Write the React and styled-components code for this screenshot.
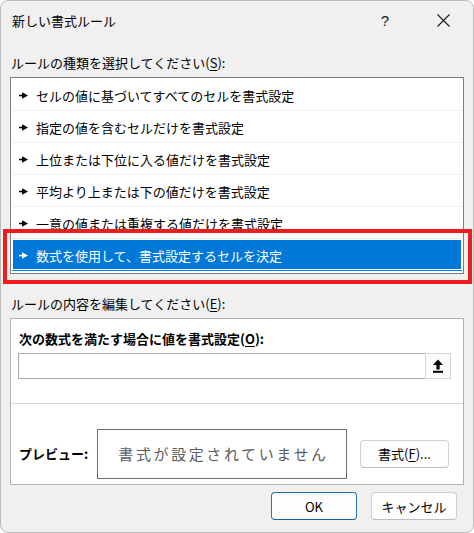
import React from 'react';
import styled, { createGlobalStyle } from 'styled-components';

const GlobalStyle = createGlobalStyle`
  html, body {
    margin: 0;
    padding: 0;
    background: #ffffff;
  }
  body {
    font-family: "Noto Sans CJK JP", "Noto Sans", sans-serif;
    font-size: 13px;
    color: #000;
  }
`;

const ruleTypes = [
  'セルの値に基づいてすべてのセルを書式設定',
  '指定の値を含むセルだけを書式設定',
  '上位または下位に入る値だけを書式設定',
  '平均より上または下の値だけを書式設定',
  '一意の値または重複する値だけを書式設定',
  '数式を使用して、書式設定するセルを決定',
];

const Marker = ({ color }) => (
  <svg width="9" height="7" viewBox="0 0 9 7">
    <path d="M0 2.7h4v1.6H0z" fill={color} />
    <path d="M3 0.3L9 3.5 3 6.7z" fill={color} />
  </svg>
);

const UploadIcon = () => (
  <svg width="10" height="14" viewBox="0 0 10 14">
    <path d="M5 0.5L10 6H6.6v4.5H3.4V6H0z" fill="#000" />
    <rect x="0" y="11.8" width="10" height="2" fill="#000" />
  </svg>
);

const CloseIcon = () => (
  <svg width="13" height="13" viewBox="0 0 13 13">
    <path d="M0.5 0.5L12.5 12.5M12.5 0.5L0.5 12.5" stroke="#1a1a1a" strokeWidth="1.1" />
  </svg>
);

export default function App() {
  return (
    <>
      <GlobalStyle />
      <Window>
        <TitleBar>
          <Title>新しい書式ルール</Title>
          <Controls>
            <CaptionButton>?</CaptionButton>
            <CaptionButton>
              <CloseIcon />
            </CaptionButton>
          </Controls>
        </TitleBar>

        <Content>
          <SectionLabel top={14}>
            ルールの種類を選択してください(<u>S</u>):
          </SectionLabel>
          <RuleList>
            {ruleTypes.map((text, i) => {
              const selected = i === ruleTypes.length - 1;
              return (
                <RuleRow key={text} selected={selected} last={selected}>
                  <Marker color={selected ? '#ffffff' : '#000000'} />
                  <RuleText>{text}</RuleText>
                </RuleRow>
              );
            })}
          </RuleList>

          <SectionLabel top={21}>
            ルールの内容を編集してください(<u>E</u>):
          </SectionLabel>
          <Panel>
            <FormulaSection>
              <BoldLabel>
                次の数式を満たす場合に値を書式設定(<u>O</u>):
              </BoldLabel>
              <FormulaInput>
                <InputField />
                <RefButton>
                  <UploadIcon />
                </RefButton>
              </FormulaInput>
            </FormulaSection>
            <PreviewSection>
              <PreviewLabel>プレビュー:</PreviewLabel>
              <PreviewBox>書式が設定されていません</PreviewBox>
              <FormatButton>
                書式(<u>F</u>)...
              </FormatButton>
            </PreviewSection>
          </Panel>

          <Footer>
            <DialogButton primary>OK</DialogButton>
            <DialogButton>キャンセル</DialogButton>
          </Footer>
        </Content>

        <Highlight />
      </Window>
    </>
  );
}

const Window = styled.div`
  position: relative;
  width: 474px;
  height: 533px;
  box-sizing: border-box;
  border: 1px solid #bcbcbc;
  border-radius: 8px;
  background: #f0f0f0;
  overflow: hidden;
`;

const TitleBar = styled.div`
  display: flex;
  align-items: center;
  height: 39px;
  padding-left: 11px;
`;

const Title = styled.div`
  font-size: 13px;
  color: #000;
`;

const Controls = styled.div`
  display: flex;
  gap: 12px;
  margin-left: auto;
  padding-right: 7px;
`;

const CaptionButton = styled.div`
  display: flex;
  align-items: center;
  justify-content: center;
  width: 46px;
  height: 32px;
  font-family: "Liberation Sans", sans-serif;
  font-size: 15px;
  color: #1a1a1a;
`;

const Content = styled.div`
  padding: 0 9px;
`;

const SectionLabel = styled.div`
  margin-top: ${(p) => p.top}px;
  padding-left: 1px;
  line-height: 18px;
  font-size: 13px;

  u {
    text-decoration-thickness: 1px;
    text-underline-offset: 2px;
  }
`;

const RuleList = styled.div`
  margin-top: 5px;
  height: 197px;
  box-sizing: border-box;
  border: 1px solid #7d7d7d;
  background: #fff;
  padding: 1px 1px 2px;
`;

const RuleRow = styled.div`
  display: flex;
  align-items: center;
  gap: 8px;
  height: 32px;
  box-sizing: border-box;
  padding: 2px 0 0 7px;
  border-bottom: 1px solid ${(p) => (p.last ? 'transparent' : '#efefef')};
  background: ${(p) => (p.selected ? '#0078d7' : '#fff')};
  color: ${(p) => (p.selected ? '#fff' : '#000')};
  box-shadow: ${(p) => (p.selected ? 'inset 0 0 0 1px #fff' : 'none')};
`;

const RuleText = styled.span`
  font-size: 13px;
  line-height: 28px;
`;

const Panel = styled.div`
  margin-top: 5px;
  border: 1px solid #b1b1b1;
  background: #fff;
`;

const FormulaSection = styled.div`
  height: 85px;
  box-sizing: border-box;
  padding: 11px 12px 0 7px;
  border-bottom: 1px solid #d9d9d9;
`;

const BoldLabel = styled.div`
  font-weight: bold;
  font-size: 13px;
  line-height: 18px;
  padding-left: 1px;

  u {
    text-underline-offset: 2px;
  }
`;

const FormulaInput = styled.div`
  display: flex;
  margin-top: 5px;
  height: 26px;
  box-sizing: border-box;
  border: 1px solid #a8a8a8;
  background: #fff;
`;

const InputField = styled.div`
  flex: 1;
`;

const RefButton = styled.div`
  display: flex;
  align-items: center;
  justify-content: center;
  width: 24px;
  margin: -1px -1px -1px 0;
  border: 1px solid #d6d6d6;
  background: #fbfbfb;
`;

const PreviewSection = styled.div`
  display: flex;
  align-items: center;
  height: 80px;
  box-sizing: border-box;
  padding: 24px 0 5px 8px;
`;

const PreviewLabel = styled.div`
  width: 78px;
  font-weight: bold;
  font-size: 13px;
`;

const PreviewBox = styled.div`
  display: flex;
  align-items: center;
  justify-content: center;
  width: 250px;
  height: 50px;
  box-sizing: border-box;
  border: 1px solid #6e6e6e;
  font-size: 15px;
  letter-spacing: 2.6px;
  color: #5c5c5c;
  padding-left: 3px;
`;

const FormatButton = styled.div`
  display: flex;
  align-items: center;
  justify-content: center;
  margin-left: 13px;
  width: 89px;
  height: 28px;
  box-sizing: border-box;
  border: 1px solid #d0d0d0;
  border-bottom-color: #bdbdbd;
  border-radius: 4px;
  background: #fdfdfd;
  font-size: 13px;

  u {
    text-underline-offset: 2px;
  }
`;

const Footer = styled.div`
  display: flex;
  justify-content: flex-end;
  gap: 14px;
  margin-top: 7px;
  padding-right: 7px;
`;

const DialogButton = styled.div`
  display: flex;
  align-items: center;
  justify-content: center;
  width: 86px;
  height: 28px;
  box-sizing: border-box;
  border: 1px solid ${(p) => (p.primary ? '#2a6fb0' : '#d0d0d0')};
  border-bottom-color: ${(p) => (p.primary ? '#1f5f9e' : '#bdbdbd')};
  border-radius: 4px;
  background: #fdfdfd;
  font-size: 13px;
`;

const Highlight = styled.div`
  position: absolute;
  left: 2px;
  top: 228px;
  width: 469px;
  height: 55px;
  box-sizing: border-box;
  border: 4px solid #ee1c1c;
  pointer-events: none;
`;
